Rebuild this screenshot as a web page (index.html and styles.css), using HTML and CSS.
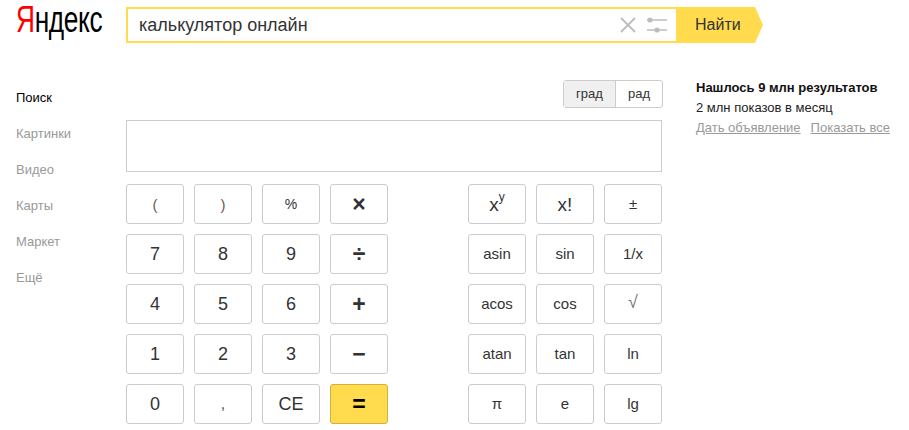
FILE: index.html
```html
<!DOCTYPE html>
<html lang="ru">
<head>
<meta charset="utf-8">
<title>калькулятор онлайн</title>
<link rel="stylesheet" href="styles.css">
</head>
<body>
<header class="header">
  <div class="logo"><span class="logo-text"><span class="logo-red">Я</span>ндекс</span></div>
  <form class="search">
    <div class="search-box">
      <span class="query">калькулятор онлайн</span>
      <svg class="icon-clear" width="16" height="16" viewBox="0 0 16 16"><path d="M1 1L15 15M15 1L1 15" stroke="#bdbdbd" stroke-width="1.8" fill="none"/></svg>
      <svg class="icon-filter" width="20" height="16" viewBox="0 0 20 16"><path d="M0 3H20M0 13H20" stroke="#bdbdbd" stroke-width="1.6" fill="none"/><circle cx="3" cy="3" r="2.6" fill="#bdbdbd"/><circle cx="10" cy="13" r="2.6" fill="#bdbdbd"/></svg>
    </div>
    <div class="search-btn">Найти</div>
  </form>
</header>
<main class="main">
  <nav class="nav">
    <a class="nav-item active">Поиск</a>
    <a class="nav-item">Картинки</a>
    <a class="nav-item">Видео</a>
    <a class="nav-item">Карты</a>
    <a class="nav-item">Маркет</a>
    <a class="nav-item">Ещё</a>
  </nav>
  <section class="calc">
    <div class="mode">
      <span class="mode-btn on">град</span><span class="mode-btn">рад</span>
    </div>
    <div class="display"></div>
    <div class="keys">
      <div class="keypad">
        <button class="key paren">(</button><button class="key paren">)</button><button class="key pct">%</button><button class="key op">×</button>
        <button class="key">7</button><button class="key">8</button><button class="key">9</button><button class="key op">÷</button>
        <button class="key">4</button><button class="key">5</button><button class="key">6</button><button class="key op">+</button>
        <button class="key">1</button><button class="key">2</button><button class="key">3</button><button class="key op">−</button>
        <button class="key">0</button><button class="key comma">,</button><button class="key">CE</button><button class="key op eq">=</button>
      </div>
      <div class="keypad fn">
        <button class="key big">x<sup class="sup">y</sup></button><button class="key big">x!</button><button class="key">±</button>
        <button class="key">asin</button><button class="key">sin</button><button class="key">1/x</button>
        <button class="key">acos</button><button class="key">cos</button><button class="key root">√</button>
        <button class="key">atan</button><button class="key">tan</button><button class="key">ln</button>
        <button class="key">π</button><button class="key">e</button><button class="key">lg</button>
      </div>
    </div>
  </section>
  <aside class="side">
    <div class="found">Нашлось 9 млн результатов</div>
    <div>2 млн показов в месяц</div>
    <div class="links"><a class="link">Дать объявление</a><a class="link">Показать все</a></div>
  </aside>
</main>
</body>
</html>
```
FILE: styles.css
```css
* { box-sizing: border-box; }
html, body { margin: 0; padding: 0; height: 430px; overflow: hidden; }
body { background: #fff; color: #333; font-family: "Liberation Sans", Arial, sans-serif; font-size: 13px; }

.header { display: flex; padding: 7px 0 0 16px; height: 43px; }
.logo { width: 110px; height: 36px; overflow: visible; }
.logo-text { display: block; width: 90px; font-size: 37px; line-height: 26px; color: #000; letter-spacing: -0.5px; white-space: nowrap; transform: scaleX(0.71); transform-origin: 0 50%; }
.logo-red { color: #f00; }

.search { display: flex; height: 36px; }
.search-box { display: flex; align-items: center; width: 550px; border: 2px solid #ffdb4d; border-right: 0; padding-left: 11px; background: #fff; }
.query { flex: 1; font-size: 18px; color: #333; white-space: nowrap; }
.icon-clear { margin-right: 11px; }
.icon-filter { margin-right: 9px; }
.search-btn { width: 87px; height: 36px; padding: 0 0 1px 19px; background: #ffdb4d; font-size: 16px; line-height: 35px; color: #333; clip-path: polygon(0 0, 79px 0, 100% 50%, 79px 100%, 0 100%); }

.main { display: flex; padding-top: 37px; }
.nav { display: flex; flex-direction: column; width: 126px; padding: 9px 0 0 16px; }
.nav-item { height: 36px; line-height: 18px; font-size: 13px; color: #999; }
.nav-item.active { color: #000; }

.calc { display: flex; flex-direction: column; width: 537px; }
.mode { display: flex; align-self: flex-end; height: 28px; border: 1px solid #ccc; border-radius: 3px; margin-bottom: 12px; }
.mode-btn { width: 51px; line-height: 26px; text-align: center; font-size: 13px; color: #333; }
.mode-btn + .mode-btn { width: 47px; border-left: 1px solid #ccc; }
.mode-btn.on { background: #f0f0f0; }
.display { width: 536px; height: 52px; border: 1px solid #ccc; margin-bottom: 12px; }

.keys { display: flex; justify-content: space-between; width: 536px; }
.keypad { display: grid; grid-template-columns: repeat(4, 58px); grid-auto-rows: 40px; gap: 10px; }
.keypad.fn { grid-template-columns: repeat(3, 58px); }
.key { padding: 0; border: 1px solid #ccc; border-radius: 3px; background: #fff; color: #333; font-family: inherit; font-size: 18px; line-height: 1; }
.fn .key { font-size: 15px; padding-bottom: 2px; }
.fn .key.big { font-size: 19px; padding-bottom: 0; }
.paren { font-size: 15px; color: #6b5a50; }
.comma { font-size: 16px; color: #555; }
.pct { font-size: 14px; }
.op { font-size: 23px; font-weight: bold; }
.eq { background: #ffdb4d; border-color: #d4b23a; color: #000; }
.sup { font-size: 12px; line-height: 0; vertical-align: 10px; }
.fn .key.root { font-size: 18px; color: #777; padding-bottom: 4px; }

.side { padding: 0 0 0 33px; margin-top: -2px; font-size: 13px; line-height: 20px; color: #222; white-space: nowrap; }
.found { font-weight: bold; color: #111; }
.links { display: flex; gap: 10px; }
.link { color: #999; text-decoration: underline; }
```
